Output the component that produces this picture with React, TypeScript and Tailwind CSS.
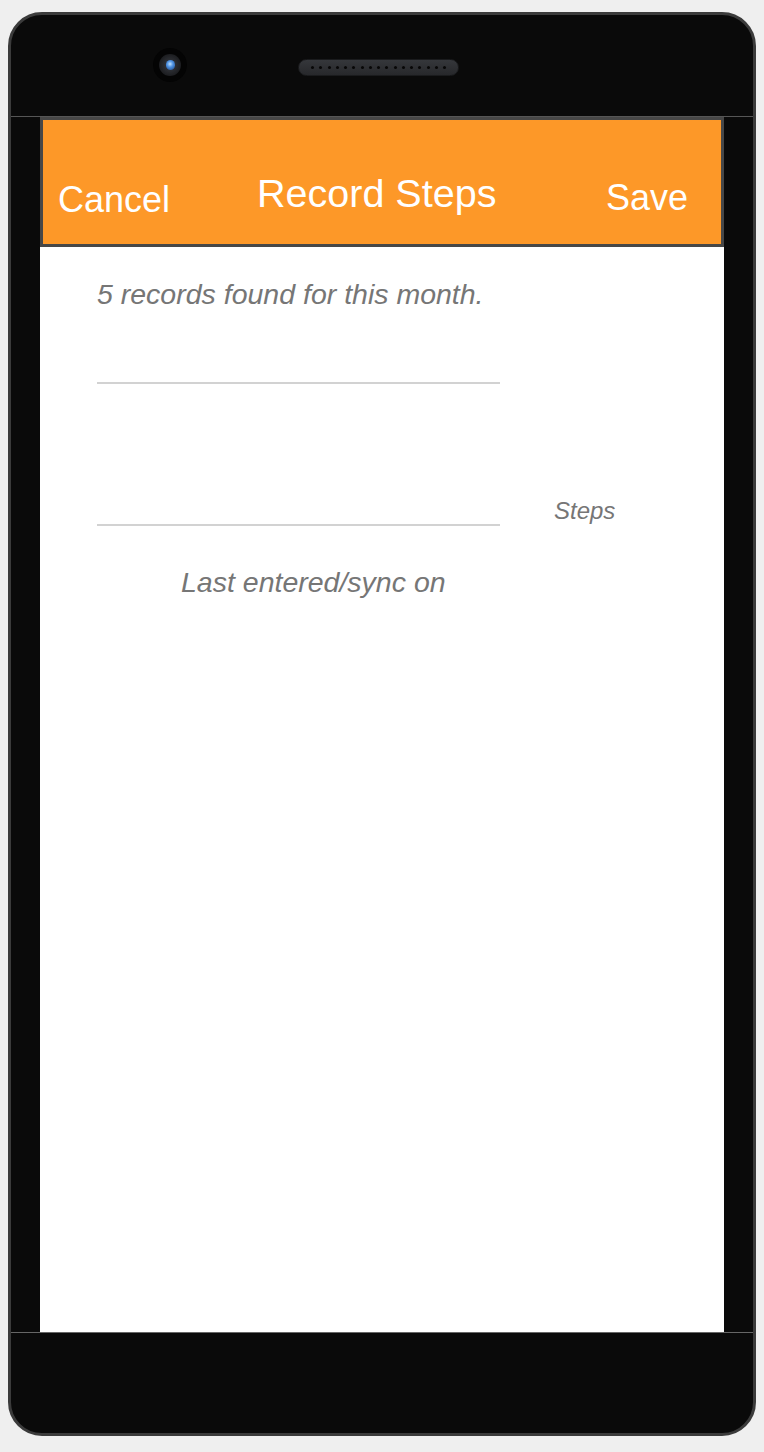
const font = { fontFamily: '"Liberation Sans", Arial, sans-serif' };

function Camera() {
  return (
    <div className="mt-[33px] flex h-[34px] w-[34px] items-center justify-center rounded-full bg-[#040404]">
      <div className="flex h-[22px] w-[22px] items-center justify-center rounded-full bg-[radial-gradient(circle,#3a3d44_0%,#1c1d20_70%,#0b0b0c_100%)]">
        <div className="h-[10px] w-[9px] rounded-full bg-[radial-gradient(circle_at_45%_40%,#bfe0ff_0%,#4a8fe0_40%,#1d3f78_100%)]" />
      </div>
    </div>
  );
}

function Speaker() {
  const dots = Array.from({ length: 17 });
  return (
    <div className="ml-[111px] mt-[44px] flex h-[17px] w-[161px] items-center justify-between rounded-full border border-[#1a1b1d] bg-[linear-gradient(#35373b,#27282b)] px-[12px]">
      {dots.map((_, i) => (
        <div key={i} className="h-[3px] w-[3px] rounded-full bg-[#070707]" />
      ))}
    </div>
  );
}

export default function App() {
  return (
    <div className="min-h-[1452px] bg-[#efefef] pl-[8px] pt-[12px]" style={font}>
      <div className="flex h-[1424px] w-[748px] flex-col overflow-hidden rounded-[34px] border-[3px] border-[#3b3b3b] bg-[#0a0a0a]">
        <div className="flex h-[102px] shrink-0 items-start border-b border-[#565656] pl-[142px]">
          <Camera />
          <Speaker />
        </div>

        <div className="ml-[29px] flex h-[1215px] w-[684px] shrink-0 flex-col bg-white">
          <header className="flex h-[130px] shrink-0 items-start border-[3px] border-[#474747] bg-[#fd9828] pl-[15px] pr-[33px] text-white">
            <span className="mt-[62px] text-[36px] leading-none">Cancel</span>
            <span className="ml-[87px] mt-[54px] text-[39.5px] leading-none">Record Steps</span>
            <span className="ml-auto mt-[60px] text-[36px] leading-none">Save</span>
          </header>

          <div className="flex flex-col text-[#767676] italic">
            <p className="ml-[57px] mt-[33px] text-[28.5px] leading-none">
              5 records found for this month.
            </p>
            <div className="ml-[57px] mt-[73px] h-[2px] w-[403px] bg-[#d2d2d2]" />
            <div className="ml-[57px] flex items-end">
              <div className="h-[142px] w-[403px] border-b-2 border-[#d2d2d2]" />
              <span className="mb-[3px] ml-[54px] text-[24px] leading-none">Steps</span>
            </div>
            <p className="ml-[141px] mt-[42px] text-[28.5px] leading-none">Last entered/sync on</p>
          </div>
        </div>

        <div className="flex-1 border-t border-[#666]" />
      </div>
    </div>
  );
}
